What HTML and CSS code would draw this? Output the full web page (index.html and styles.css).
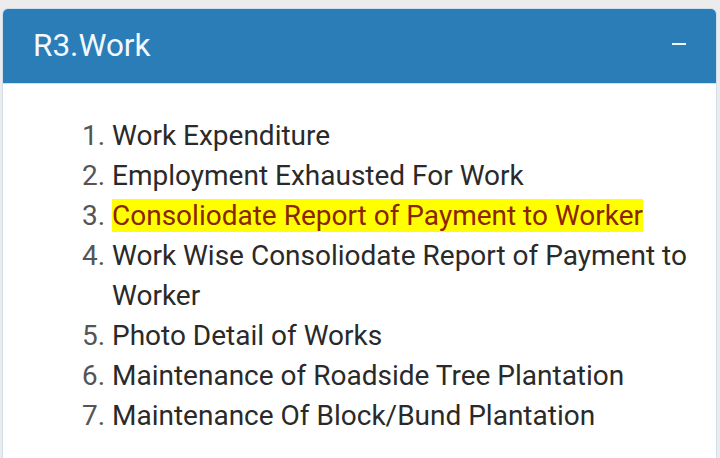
FILE: index.html
```html
<!DOCTYPE html>
<html>
<head>
<meta charset="utf-8">
<link rel="stylesheet" href="styles.css">
</head>
<body>
<div class="card">
  <div class="card-header">
    <span class="title">R3.Work</span>
    <span class="toggle"></span>
  </div>
  <div class="card-body">
    <ol class="report-list">
      <li>Work Expenditure</li>
      <li>Employment Exhausted For Work</li>
      <li><span class="hl">Consoliodate Report of Payment to Worker</span></li>
      <li>Work Wise Consoliodate Report of Payment to Worker</li>
      <li>Photo Detail of Works</li>
      <li>Maintenance of Roadside Tree Plantation</li>
      <li>Maintenance Of Block/Bund Plantation</li>
    </ol>
  </div>
</div>
</body>
</html>
```
FILE: styles.css
```css
html, body {
  margin: 0;
  padding: 0;
  background: #ececec;
  height: 458px;
  overflow: hidden;
}
body {
  padding: 8px 3px 0 2px;
  font-family: Roboto, "Liberation Sans", sans-serif;
}
.card {
  background: #ffffff;
  border: 1px solid #cfe0ec;
  border-bottom: none;
  border-radius: 6px 6px 0 0;
  height: 460px;
  overflow: hidden;
}
.card-header {
  background: #2b7db8;
  height: 74px;
  display: flex;
  align-items: center;
  justify-content: space-between;
  padding: 0 30px 0 30px;
  border-bottom: 1px solid #cfe0ec;
}
.title {
  color: #f2f8fc;
  font-size: 31.5px;
  margin-top: -1px;
}
.toggle {
  width: 14px;
  height: 2px;
  background: #eef6fb;
  margin-top: -4px;
}
.card-body {
  padding: 32px 0 0 0;
}
.report-list {
  margin: 0;
  padding: 0 0 0 109px;
  font-size: 28px;
  line-height: 40px;
  color: #2a2a2a;
}
.report-list li::marker {
  color: #555555;
}
.hl {
  background: #ffff00;
  color: #8b2500;
}
```
